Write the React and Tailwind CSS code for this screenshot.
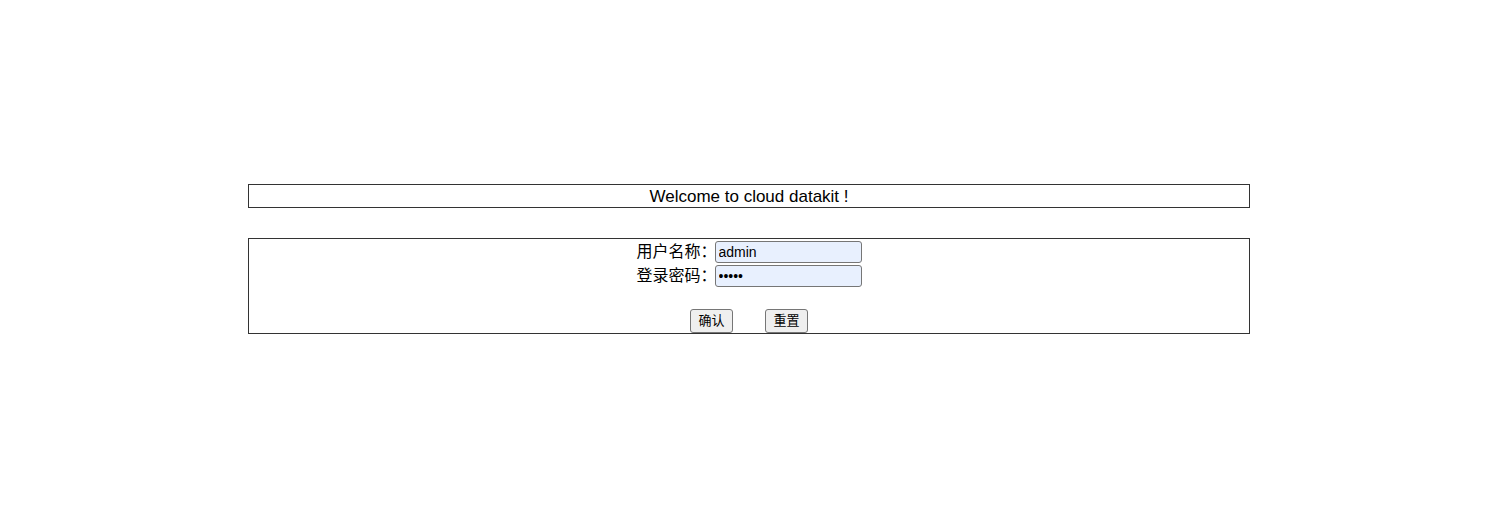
import React from "react";

function App() {
  return (
    <div className="min-h-[522px] bg-white pt-[184px] font-['Liberation_Sans','Noto_Sans_CJK_SC',sans-serif] text-black">
      {/* Welcome banner */}
      <div className="ml-[248px] flex h-[24px] w-[1002px] items-center justify-center border border-[#333] pt-[1px] text-[17px]">
        Welcome to cloud datakit !
      </div>

      {/* Login form */}
      <div className="ml-[248px] mt-[30px] flex h-[96px] w-[1002px] flex-col items-center border border-[#333] pt-[2px]">
        <div className="flex flex-col gap-[2px]">
          <div className="flex items-center whitespace-nowrap">
            <span className="-mr-[2px] shrink-0 text-[16px] leading-[22px]">用户名称：</span>
            <input
              defaultValue="admin"
              className="h-[22px] w-[147px] rounded-[3px] border border-[#767676] bg-[#e8f0fe] px-[3px] text-[14px] outline-none"
            />
          </div>
          <div className="flex items-center whitespace-nowrap">
            <span className="-mr-[2px] shrink-0 text-[16px] leading-[22px]">登录密码：</span>
            <input
              type="password"
              defaultValue="admin"
              className="h-[22px] w-[147px] rounded-[3px] border border-[#767676] bg-[#e8f0fe] px-[3px] text-[14px] outline-none"
            />
          </div>
        </div>
        <div className="mt-[22px] flex gap-[32px]">
          <button className="h-[24px] w-[43px] rounded-[3px] border border-[#767676] bg-[#efefef] text-[13px]">
            确认
          </button>
          <button className="h-[24px] w-[43px] rounded-[3px] border border-[#767676] bg-[#efefef] text-[13px]">
            重置
          </button>
        </div>
      </div>
    </div>
  );
}

export default App;
